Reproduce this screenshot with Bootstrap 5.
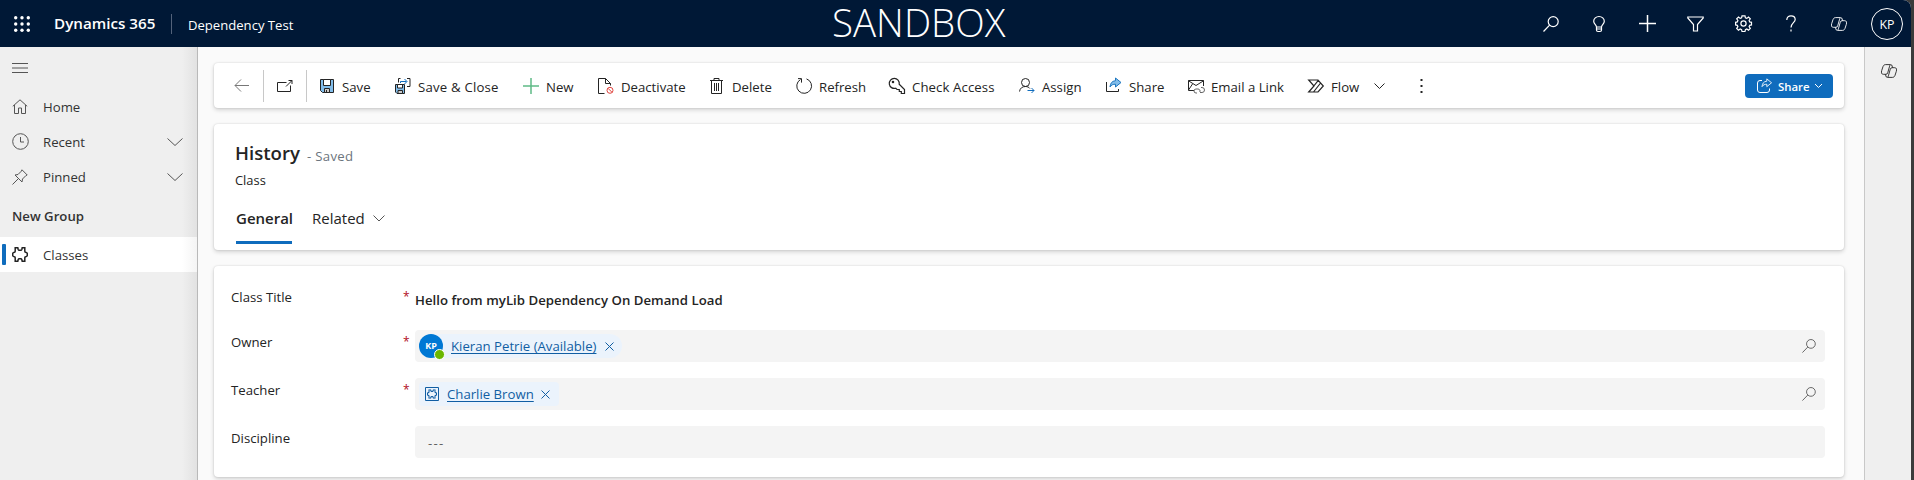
<!DOCTYPE html>
<html lang="en">
<head>
<meta charset="utf-8">
<title>Dynamics 365</title>
<link href="https://cdn.jsdelivr.net/npm/bootstrap@5.3.0/dist/css/bootstrap.min.css" rel="stylesheet">
<style>
  body{font-family:"Open Sans","Noto Sans",sans-serif;font-size:13.2px;line-height:20px;color:#242424;background:#3b3b3b;height:480px;overflow:hidden}
  svg{display:block;flex:none;fill:none;stroke:currentColor;overflow:visible}
  .shell{width:1911px;height:480px;background:#fafafa;border-radius:0 8px 0 0;overflow:hidden}
  .topbar{height:47px;background:#001836;color:#fff}
  .waffle{margin-left:14px}
  .brand{font-size:15.2px;width:118px;height:20px;line-height:19px;border-right:1px solid #53627a}
  .appname{width:120px;padding:2px 0 0 16px;font-size:13.1px}
  .env{font-size:38.5px;font-weight:300;line-height:44px;height:47px;width:180px;white-space:nowrap;margin-left:540px}
  .topicon{width:48px;display:flex;justify-content:center}
  .me{width:32px;height:32px;border:1px solid #fff;font-size:12.4px;font-weight:500;margin-left:8px;padding-top:2px}
  .sidebar{width:198px;background:linear-gradient(90deg,#efefef 182px,#e2e2e2 197px);border-right:1px solid #b9b9b9}
  .sideitem{height:35px;padding-left:12px;color:#333}
  .sideitem svg{color:#555}
  .sideitem span{margin-left:15px;flex:1}
  .sideitem .chev{margin-right:14px}
  .picked{background:linear-gradient(90deg,#fff 182px,#f4f4f4 197px);padding-left:2px}
  .picked::before{content:"";width:4px;height:21px;background:#0f6cbd;border-radius:1px;margin-right:6px}
  .picked svg{color:#222}
  .panel{background:#fff;border-radius:4px;box-shadow:0 0 2px rgba(0,0,0,.14),0 2px 4px rgba(0,0,0,.16)}
  .main{padding:16px 20px 0 16px}
  .cmdbar{height:45px;padding-right:11px}
  .cmds{display:grid;grid-template-columns:49px 1px 42px 1px 12px 76px 128px 75px 111px 87px 93px 130px 87px 82px 120px 66px 38px 1fr;align-items:center;flex:1;white-space:nowrap}
  .cmds>div{display:flex;align-items:center;gap:7px}
  .cmds>div span{padding-top:2px}
  .cmds .rule{height:32px;background:#c8c8c8}
  .sharebtn{width:88px;height:24px;background:#0f6cbd;color:#fff;border-radius:4px;font-size:11.4px;padding-left:12px}
  .sharebtn span{margin-left:7px;width:37px;padding-top:2px}
  .head{height:126px;padding:14px 21px 0}
  .title{font-size:18.6px;line-height:24px;width:72px;padding-top:2px}
  .tabsrow{font-size:15px;margin-top:18px}
  .tabon{width:56px;height:36px;border-bottom:3px solid #0f6cbd;white-space:nowrap;margin-left:1px}
  .form{height:211px;padding:16px 19px 0 17px}
  .field{display:grid;grid-template-columns:172px 12px 1fr;height:48px}
  .lbl{padding-top:2px}
  .req{color:#b10e1c;padding-top:2px;line-height:20px;font-size:12px}
  .box{height:32px;background:#f4f4f4;border-radius:4px;padding:0 9px 0 4px}
  .pill{height:24px;background:#ebf3fc;color:#115ea3;border-radius:12px;width:203px;flex:none}
  .pill u{text-underline-offset:2px;white-space:nowrap;margin-left:8px;width:154px;flex:none}
  .pill.square{border-radius:4px;width:140px;padding-left:6px}
  .pill.square u{width:94px}
  .face{width:24px;height:24px;background:#0078d4;color:#fff;font-size:9px;line-height:24px;flex:none}
  .dot{position:absolute;right:-2px;bottom:-2px;width:11px;height:11px;border-radius:50%;background:#6bb700;border:1px solid #fff}
  .rail{width:47px;background:#efefef;border-left:1px solid #c8c8c8;padding:17px 0 0 16px}
</style>
<script src="https://cdn.jsdelivr.net/npm/bootstrap@5.3.0/dist/js/bootstrap.bundle.min.js"></script>
</head>
<body>
<svg width="0" height="0" class="position-absolute">
  <symbol id="search" viewBox="0 0 16 16"><circle cx="10.200" cy="5.600" r="5"/><path d="M6.600 9.200.5 15.500"/></symbol>
  <symbol id="chev" viewBox="0 0 16 8"><path d="M.5.5 8 7.500 15.500.5"/></symbol>
  <symbol id="copilot" viewBox="0 0 16 14"><path id="loop" stroke-width=".9" d="M9.300.6H4.600C3.300.6 2.500 1.300 2 2.600L.7 6.600C0 8.800.6 10.300 2.300 10.300H4.900C5.900 10.300 6.400 9.800 6.700 8.900L8.600 2.200C8.900 1.100 9.200.6 9.900.6 10.600.6 10.900 1.200 11.100 2L11.600 3.700"/><use href="#loop" transform="rotate(180 8 7)"/></symbol>
  <symbol id="puzzle" viewBox="0 0 16 15"><path d="M3.200.8h2.600l.4 1.700q.3.800 1 .8h1.600q.7 0 1-.8l.4-1.700h2.600v3.500q0 .8.800 1l.9.300q.8.400.8 1.200v1.400q0 .8-.8 1.200l-.9.300q-.8.200-.8 1v3.500h-2.600l-.4-1.700q-.3-.8-1-.8H7.200q-.7 0-1 .8l-.4 1.700H3.200v-3.500q0-.8-.8-1l-.9-.3Q.7 9 .7 8.200V6.800Q.7 6 1.500 5.600l.9-.3q.8-.2.8-1z"/></symbol>
  <symbol id="share" viewBox="0 0 16 15"><path d="M9.500 1v2.700C5.800 4 4.300 6.500 4 10c1.400-2.200 3-2.800 5.500-2.800V10L15 5.500z"/></symbol>
</svg>

<div class="shell d-flex flex-column">
  <header class="topbar d-flex align-items-center">
    <svg width="16" height="16" class="waffle"><g fill="#fff" stroke="none"><circle cx="1.700" cy="1.700" r="1.700"/><circle cx="8" cy="1.700" r="1.700"/><circle cx="14.300" cy="1.700" r="1.700"/><circle cx="1.700" cy="8" r="1.700"/><circle cx="8" cy="8" r="1.700"/><circle cx="14.300" cy="8" r="1.700"/><circle cx="1.700" cy="14.300" r="1.700"/><circle cx="8" cy="14.300" r="1.700"/><circle cx="14.300" cy="14.300" r="1.700"/></g></svg>
    <div class="ms-4 brand fw-semibold text-nowrap">Dynamics 365</div>
    <div class="appname text-nowrap">Dependency Test</div>
    <div class="env">SANDBOX</div>
    <div class="d-flex align-items-center ms-auto pe-2">
      <div class="topicon"><svg width="16" height="16" stroke-width="1.200"><use href="#search"/></svg></div>
      <div class="topicon"><svg width="12" height="16" stroke-width="1.200"><path d="M3.500 11C3.300 8.500.7 8 .7 5.200a5.300 4.700 0 0 1 10.600 0C11.300 8 8.700 8.500 8.500 11zM3.500 11v3q0 1.500 1.500 1.500h2q1.500 0 1.500-1.500v-3M3.500 13h5"/></svg></div>
      <div class="topicon"><svg width="17" height="17" stroke-width="1.500"><path d="M8.500 0v17M0 8.500h17"/></svg></div>
      <div class="topicon"><svg width="17" height="16" stroke-width="1.200"><path d="M.8 1h15.400v1L10.500 8.500v6.500h-4V8.500L.8 2z"/></svg></div>
      <div class="topicon"><svg width="17" height="17" stroke-width="1.200"><path d="M7 .8h3l.4 2 1.400.6L13.500 2l1.800 1.800-1.200 1.700.6 1.400 1.800.4v2.600l-1.800.4-.6 1.400 1.200 1.700-1.800 1.800-1.700-1.200-1.400.6-.4 1.900H7l-.4-1.900-1.400-.6-1.700 1.200-1.800-1.800 1.200-1.700-.6-1.400-1.700-.4V7.300l1.700-.4.6-1.400-1.200-1.700L3.500 2l1.700 1.400 1.400-.6z"/><circle cx="8.500" cy="8.500" r="2.600"/></svg></div>
      <div class="topicon"><svg width="10" height="17" stroke-width="1.200"><path d="M.8 5C.8 2.300 2.500.8 5 .8s4.200 1.500 4.200 3.700C9.200 7.500 5 8 5 12.500M5 14.500V16.500"/></svg></div>
      <div class="topicon"><svg width="16" height="14"><use href="#copilot"/></svg></div>
      <div class="me rounded-circle d-flex align-items-center justify-content-center">KP</div>
    </div>
  </header>

  <div class="d-flex flex-grow-1">
    <nav class="sidebar flex-shrink-0">
      <div class="sideitem d-flex align-items-center" style="height:42px"><svg width="16" height="10"><path d="M0 .5h16M0 5h16M0 9.500h16"/></svg></div>
      <div class="sideitem d-flex align-items-center"><svg width="16" height="15"><path d="M.8 7.300 8 .8l7.200 6.500M2.500 6v8.500h4V9h3v5.500h4V6"/></svg><span>Home</span></div>
      <div class="sideitem d-flex align-items-center"><svg width="17" height="17"><circle cx="8.500" cy="8.500" r="7.800"/><path d="M8.500 4v5H12"/></svg><span style="margin-left:14px">Recent</span><svg class="chev" width="16" height="8"><use href="#chev"/></svg></div>
      <div class="sideitem d-flex align-items-center"><svg width="16" height="16"><path d="M10 .8 15.200 6l-1.400.7-3.300 3.300-.5 3L3 6l3-.5 3.300-3.300zM6.500 9.500.5 15.500"/></svg><span>Pinned</span><svg class="chev" width="16" height="8"><use href="#chev"/></svg></div>
      <div class="sideitem d-flex align-items-center fw-semibold" style="height:43px">New Group</div>
      <div class="sideitem picked d-flex align-items-center"><svg width="16" height="15" stroke-width="1.500"><use href="#puzzle"/></svg><span>Classes</span></div>
    </nav>

    <main class="main flex-grow-1 d-flex flex-column gap-3">
      <section class="panel cmdbar d-flex align-items-center flex-shrink-0">
        <div class="cmds">
          <div style="padding-left:20px"><svg width="15" height="13"><path stroke="#777" d="M15 6.500H1M7 .5l-6 6 6 6"/></svg></div>
          <i class="rule"></i>
          <div style="padding-left:13px"><svg width="16" height="12"><path d="M9.500 2.500h-9v9h13v-6M9 6.500 15 .5M11.500.5H15v3.500"/></svg></div>
          <i class="rule"></i><i></i>
          <div><svg width="16" height="16"><path fill="#82bdea" d="M1.500 1.500h13v13h-11l-2-2z"/><path fill="#fff" d="M4.500 1.500h7v6h-7z"/><path fill="#ccc" d="M5.500 10.500h5v4h-5z"/><path d="M7.500 12v2.500"/></svg><span>Save</span></div>
          <div><svg width="16" height="16"><path fill="#82bdea" d="M.5 6.500h9v9H2l-1.500-1.500z"/><path fill="#fff" d="M2.500 6.500h5v3.500h-5z"/><path fill="#ccc" d="M3 12.500h4.500v3H3z"/><path d="M5.500.5h-2v4M12 .5h3v8h-3"/><path stroke="#0f6cbd" d="M5.500 5V3.500h6M9.500 1l2.500 2.500L9.500 6"/></svg><span style="letter-spacing:.2px">Save &amp; Close</span></div>
          <div><svg width="16" height="16"><path stroke="#5fba86" stroke-width="1.500" d="M8 0v16M0 8h16"/></svg><span>New</span></div>
          <div><svg width="16" height="16"><path d="M6.500 15.500h-6V.5h7l5 5v2M7.500.5v5h5"/><g stroke="#e0443e"><circle cx="12" cy="12.300" r="3"/><path d="m10 10.300 4 4"/></g></svg><span>Deactivate</span></div>
          <div><svg width="16" height="16"><path d="M1 2.500h13M5 2.500v-2h5v2M2.500 2.500v13h10v-13M5.500 5v8M7.500 5v8M9.500 5v8"/></svg><span>Delete</span></div>
          <div><svg width="16" height="16"><path d="M10.500.9A7.400 7.400 0 1 1 4.500 1.500M2 .6h3.500v4"/></svg><span>Refresh</span></div>
          <div><svg width="16" height="16" stroke-width="1.200"><path d="M6.700 10.200A5 5 0 1 1 10.200 6.200L15.500 11.500v4h-3.200v-2h-2v-2H8z"/><circle cx="4" cy="4" r=".7"/></svg><span style="letter-spacing:.1px">Check Access</span></div>
          <div><svg width="16" height="16"><circle cx="6.500" cy="4.500" r="4"/><path d="M.5 13.500C1 10 3.500 8.500 6.500 8.500c2 0 3.500.8 4.400 2"/><path stroke="#0f6cbd" d="M8.500 12.500h6.500M12.500 10l2.500 2.500-2.500 2.500"/></svg><span>Assign</span></div>
          <div><svg width="16" height="16"><path d="M.5 4v9.500h12V11"/><g fill="#82bdea" stroke="#1d76bf"><use href="#share" width="16" height="15" y="-1"/></g></svg><span>Share</span></div>
          <div><svg width="16" height="14"><path d="M6 11.500H.5v-10h15V7M.5 1.800 8 6.500l7.500-4.700M.5 11 4.500 5"/><path stroke="#666" d="M9 14H8a2 2 0 0 1 0-4h2a2 2 0 0 1 1.800 3M13 8.500h1a2.300 2.300 0 0 1 0 5h-2"/></svg><span>Email a Link</span></div>
          <div><svg width="16" height="14" stroke-width="1.200"><path d="M.7 1h9.300l5.300 6-5.300 6H.7L6 7zM1 13 10.300 1.300M5.500 13 12.600 4"/></svg><span>Flow</span></div>
          <div><svg width="11" height="6"><path d="M.5.5 5.500 5.500 10.500.5"/></svg></div>
          <div style="padding-left:8px"><svg width="3" height="15"><path stroke-width="2" stroke-dasharray="2 4" d="M1.500 1v14"/></svg></div>
        </div>
        <div class="sharebtn d-flex align-items-center"><svg width="14" height="14"><path d="M5 1.500H3Q.5 1.500.5 4v7q0 2.500 2.500 2.500h7q2.500 0 2.500-2.500V9.500"/><use href="#share" width="14" height="13" x="1.500" y="-1"/></svg><span class="fw-semibold">Share</span><svg width="7" height="4"><path d="m0 0 3.500 3.500L7 0"/></svg></div>
      </section>

      <section class="panel head flex-shrink-0">
        <div class="d-flex align-items-center text-nowrap"><div class="title fw-semibold">History</div><div class="text-secondary" style="padding-top:8px;letter-spacing:.3px">- Saved</div></div>
        <div style="padding-top:4px;font-size:12.900px">Class</div>
        <div class="tabsrow d-flex"><div class="tabon fw-semibold">General</div><div style="margin-left:20px;width:61px">Related</div><svg width="12" height="7" style="margin-top:7px"><path stroke="#555" d="m.5.5 5.500 5.500L11.500.5"/></svg></div>
      </section>

      <section class="panel form flex-shrink-0">
        <div class="field"><div class="lbl" style="padding-top:5px">Class Title</div><div class="req" style="padding-top:5px">*</div><div class="fw-semibold" style="padding-top:8px;letter-spacing:.03px">Hello from myLib Dependency On Demand Load</div></div>
        <div class="field"><div class="lbl">Owner</div><div class="req">*</div>
          <div class="box d-flex align-items-center"><div class="pill d-flex align-items-center"><div class="face rounded-circle text-center fw-bold position-relative">KP<i class="dot"></i></div><u>Kieran Petrie (Available)</u><svg width="9" height="9"><path d="m.5.5 8 8M8.500.5l-8 8"/></svg></div><svg class="ms-auto" width="14" height="14" style="color:#555"><use href="#search"/></svg></div></div>
        <div class="field"><div class="lbl">Teacher</div><div class="req">*</div>
          <div class="box d-flex align-items-center"><div class="pill square d-flex align-items-center"><svg width="14" height="14"><path d="M.5.5h13v13H.5z"/><use href="#puzzle" x="2" y="2.200" width="10" height="9.600" stroke-width="1.700"/></svg><u>Charlie Brown</u><svg width="9" height="9"><path d="m.5.5 8 8M8.500.5l-8 8"/></svg></div><svg class="ms-auto" width="14" height="14" style="color:#555"><use href="#search"/></svg></div></div>
        <div class="field"><div class="lbl">Discipline</div><div></div><div class="box d-flex align-items-center" style="padding:2px 0 0 13px;color:#616161;letter-spacing:1.300px">---</div></div>
      </section>
    </main>

    <aside class="rail flex-shrink-0"><svg width="16" height="14"><use href="#copilot"/></svg></aside>
  </div>
</div>
</body>
</html>
